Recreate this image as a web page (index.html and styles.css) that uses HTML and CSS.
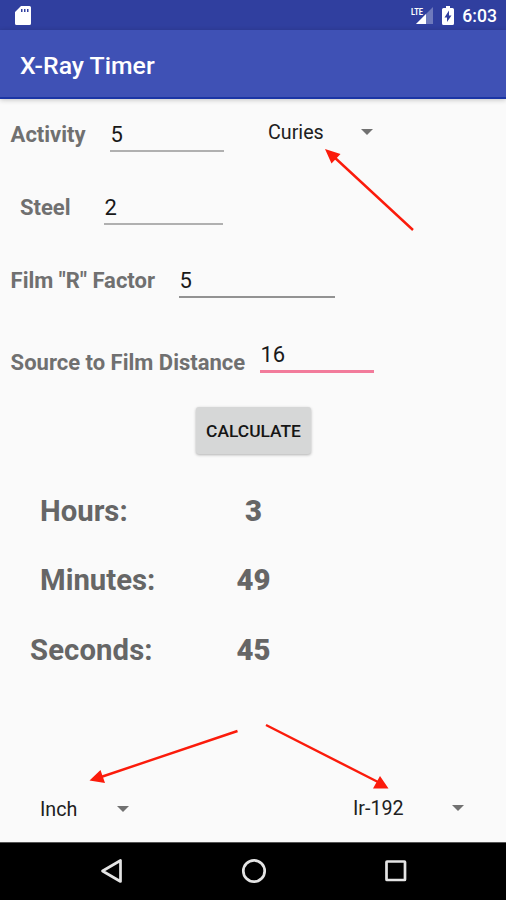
FILE: index.html
```html
<!DOCTYPE html>
<html lang="en">
<head>
<meta charset="utf-8">
<title>X-Ray Timer</title>
<link rel="stylesheet" href="styles.css">
</head>
<body>
<div class="screen">
  <header class="status-bar">
    <svg class="sd-icon" width="17" height="20" viewBox="0 0 17 20"><path fill="#fff" fill-rule="evenodd" d="M6 0H14.500Q16 0 16 1.500V17.500Q16 19 14.500 19H1.500Q0 19 0 17.500V6ZM6 3V6H7.500V3ZM9 3V6H10.500V3ZM12 3V6H13.500V3Z"/></svg>
    <div class="status-right">
      <svg width="23" height="20" viewBox="0 0 23 20"><path fill="#fff" fill-opacity=".3" d="M22 1V18H5Z"/><path fill="#fff" d="M15 8V18H5Z"/><text class="lte" x="0" y="8.500" textLength="12" lengthAdjust="spacingAndGlyphs">LTE</text></svg>
      <svg class="battery" width="12" height="19" viewBox="0 0 12 19"><path fill="#fff" d="M4 0H8V2H10.500Q12 2 12 3.500V17.500Q12 19 10.500 19H1.500Q0 19 0 17.500V3.500Q0 2 1.500 2H4Z"/><path fill="#303f9f" d="M7 4.500L2.500 11.500H5V16L9.500 9.500H7Z"/></svg>
      <span class="clock">6:03</span>
    </div>
  </header>
  <div class="app-bar"><h1>X-Ray Timer</h1></div>
  <main>
    <div class="row activity">
      <label>Activity</label><span class="field">5</span>
      <span class="spinner curies"><span>Curies</span><i class="caret"></i></span>
    </div>
    <div class="row steel"><label>Steel</label><span class="field">2</span></div>
    <div class="row factor"><label>Film "R" Factor</label><span class="field">5</span></div>
    <div class="row distance"><label>Source to Film Distance</label><span class="field focused">16</span></div>
    <button class="calculate">CALCULATE</button>
    <div class="results">
      <div class="result"><span class="hours">Hours:</span><b>3</b></div>
      <div class="result"><span class="minutes">Minutes:</span><b>49</b></div>
      <div class="result"><span class="seconds">Seconds:</span><b>45</b></div>
    </div>
    <div class="bottom">
      <span class="spinner inch"><span>Inch</span><i class="caret"></i></span>
      <span class="spinner isotope"><span>Ir-192</span><i class="caret"></i></span>
    </div>
  </main>
  <nav class="nav-bar">
    <svg width="24" height="26" viewBox="0 0 24 26"><path d="M20.500 2.500V23.500L2.500 13Z"/></svg>
    <svg width="26" height="26" viewBox="0 0 26 26"><circle cx="13" cy="13" r="10.700"/></svg>
    <svg width="24" height="26" viewBox="0 0 24 26"><rect x="2.500" y="3.500" width="18.500" height="18.500" rx=".5"/></svg>
  </nav>
  <svg class="arrows" width="506" height="900" viewBox="0 0 506 900">
    <path class="shaft" d="M413 230L333 156M237.500 731L101 777M266 725L378 782"/>
    <path class="head" d="M325 149L340.500 154L331.500 163.500ZM89.500 780.500L100.500 770L105 783ZM388.500 788.500L380 776L373 788.500Z"/>
  </svg>
</div>
</body>
</html>
```
FILE: styles.css
```css
* { box-sizing: border-box; }
body { margin: 0; font-family: Roboto, sans-serif; }
.screen { position: relative; width: 506px; height: 900px; background: #fafafa; display: flex; flex-direction: column; overflow: hidden; }
.status-bar { height: 30px; background: #303f9f; display: flex; justify-content: space-between; padding: 6px 9px 0 15px; }
.status-right { display: flex; align-items: flex-start; }
.lte { font: 700 9px Roboto, sans-serif; fill: #fff; }
.battery { margin-left: 8px; }
.clock { margin-left: 8px; font-size: 17.6px; line-height: 20px; font-weight: 500; color: #fff; }
.app-bar { height: 69px; background: #3f51b5; border-bottom: 2px solid #1b35a5; box-shadow: 0 1px 5px rgba(0,0,0,.22); padding: 21px 0 0 20px; }
h1 { margin: 0; color: #fff; font-size: 24.8px; line-height: 30px; font-weight: 500; }
main { height: 743px; display: flex; flex-direction: column; }
.row { display: flex; align-items: flex-start; font-size: 22px; line-height: 26px; padding-left: 10px; }
label { color: #707070; font-weight: 700; white-space: nowrap; padding-left: .6px; }
.field { color: #181818; height: 30px; border-bottom: 2px solid #b0b0b0; padding-left: .5px; }
.activity { height: 72px; padding-top: 23px; }
.activity label { width: 100px; }
.activity .field { width: 114px; height: 30px; }
.steel { height: 73px; padding: 24px 0 0 20px; }
.steel label { width: 84px; padding-left: 0; }
.steel .field { width: 119px; }
.factor { height: 74px; padding-top: 23px; }
.factor label { width: 169px; padding-top: 1px; }
.factor .field { width: 156px; height: 31px; line-height: 27px; border-color: #929292; }
.distance { height: 89px; padding-top: 23px; }
.distance label { width: 250px; padding-top: 9px; }
.distance .field { width: 114px; height: 32px; line-height: 28px; border-bottom: 3px solid #f27b9b; }
.spinner { display: flex; align-items: flex-start; justify-content: space-between; font-size: 19.7px; line-height: 26px; color: #202020; }
.caret { width: 12px; height: 6px; margin-top: 9px; background: #717171; clip-path: polygon(0 0, 100% 0, 50% 100%); }
.curies { width: 105px; margin: -2px 0 0 44px; }
.calculate { width: 115px; height: 47px; margin-left: 196px; padding: 0; border: 0; border-radius: 3px; background: #d6d7d7; box-shadow: 0 1px 3px rgba(0,0,0,.3); font: 500 17.4px Roboto, sans-serif; color: #151515; }
.results { margin-top: 40px; font-size: 29.3px; font-weight: 700; color: #666; line-height: 34px; display: grid; grid-template-rows: 69px 70px 70px; }
.result { display: grid; grid-template-columns: 207px 93px; }
.result b { text-align: center; }
.hours, .minutes { padding-left: 40px; }
.seconds { padding-left: 30px; letter-spacing: .1px; }
.bottom { display: flex; align-items: flex-start; margin-top: 93px; padding-left: 40px; }
.inch { width: 89px; margin-top: 1px; }
.isotope { width: 111px; margin-left: 224px; }
.nav-bar { height: 58px; background: #000; border-top: 1px solid #555; display: flex; align-items: flex-start; justify-content: space-between; padding: 15px 98px 0 100px; }
.nav-bar svg { fill: none; stroke: #e4e4e4; stroke-width: 2.7; stroke-linejoin: round; }
.arrows { position: absolute; inset: 0; pointer-events: none; }
.shaft { stroke: #fb1b0b; stroke-width: 2.4; fill: none; }
.head { fill: #fb1b0b; }
```
